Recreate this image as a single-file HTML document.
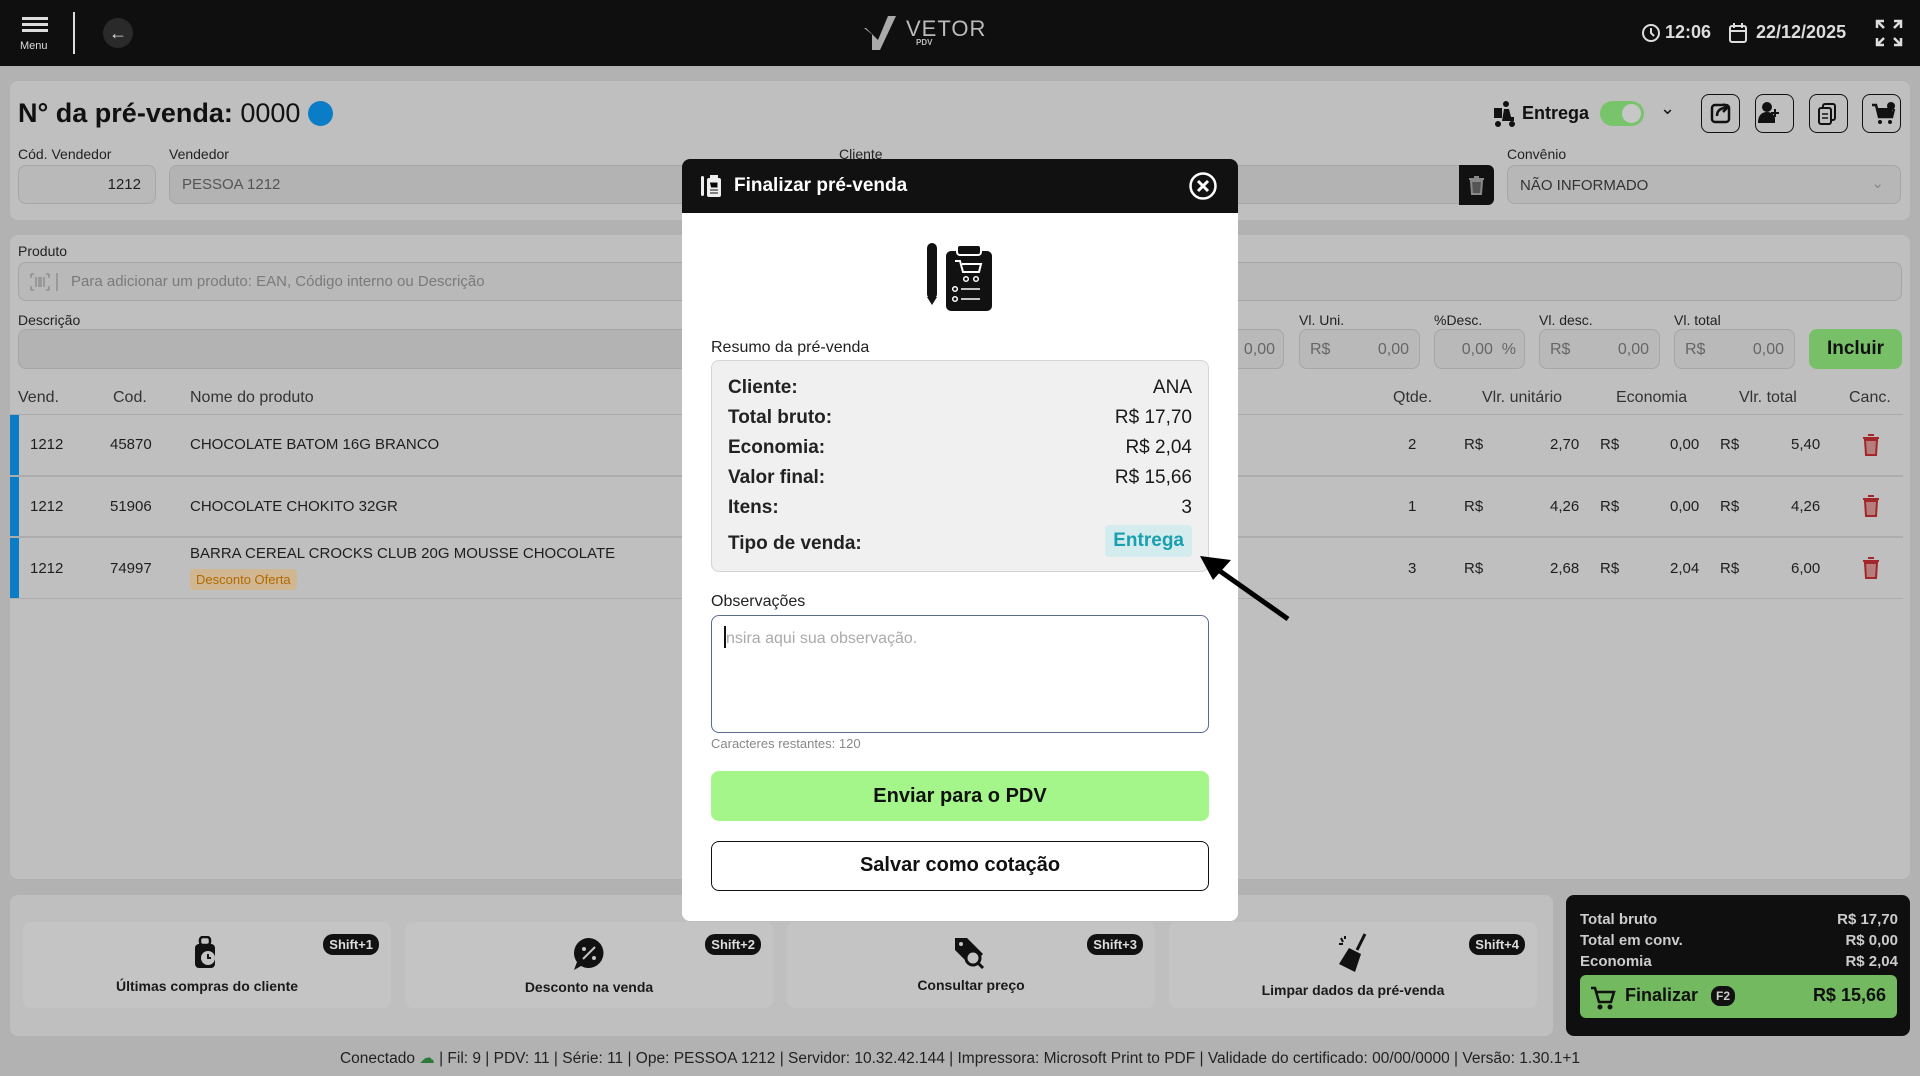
<!DOCTYPE html>
<html><head><meta charset="utf-8"><style>
*{box-sizing:border-box;margin:0;padding:0}
body{width:1920px;height:1076px;overflow:hidden;background:#b2b2b2;font-family:"Liberation Sans",sans-serif;color:#1a1a1a;position:relative}
.a{position:absolute}
.panel{position:absolute;background:#bfbfbf;border-radius:8px}
.lbl{position:absolute;font-size:14px;color:#222}
.inp{position:absolute;background:#b9b9b9;border:1px solid #a6a6a6;border-radius:8px;font-size:15px;color:#555}
.th{position:absolute;font-size:16px;color:#333;top:389px}
.td{position:absolute;font-size:15px;color:#1e1e1e}
.card{position:absolute;background:#c4c4c4;border-radius:8px;top:922px;height:86px;width:368px}
.card .t{position:absolute;left:0;right:0;text-align:center;font-size:14px;font-weight:bold;color:#1a1a1a}
.badge{position:absolute;right:12px;top:12px;background:#111;color:#ddd;font-size:13px;font-weight:bold;border-radius:10px;padding:3px 6px}
.row{position:absolute;left:16px;right:16px;font-size:19px;display:flex;justify-content:space-between}
.row b{color:#222}
</style></head><body>
<div class="a" style="left:0;top:0;width:1920px;height:66px;background:#0f0f0f"></div>
<div class="a" style="left:22px;top:17px;width:26px;height:3px;background:#ddd;box-shadow:0 6px 0 #ddd,0 12px 0 #ddd"></div>
<div class="a" style="left:20px;top:40px;font-size:11px;color:#ddd">Menu</div>
<div class="a" style="left:73px;top:12px;width:2px;height:42px;background:#ddd"></div>
<div class="a" style="left:103px;top:18px;width:30px;height:30px;border-radius:50%;background:#2a2a2a;color:#ddd;font-size:18px;text-align:center;line-height:30px">←</div>
<svg class="a" style="left:862px;top:14px" width="40" height="38"><path d="M2 14 L12 22 L4 14Z M10 36 L18 36 L34 2 L26 2 L16 26 L10 20Z" fill="#aaa"/></svg>
<div class="a" style="left:906px;top:16px;font-size:22px;color:#bbb;letter-spacing:1px">VETOR</div>
<div class="a" style="left:916px;top:38px;font-size:8px;color:#bbb;font-weight:bold">PDV</div>
<svg class="a" style="left:1641px;top:23px" width="20" height="20"><circle cx="10" cy="10" r="8" fill="none" stroke="#ddd" stroke-width="2"/><path d="M10 5v5l3 3" stroke="#ddd" stroke-width="2" fill="none"/></svg>
<div class="a" style="left:1665px;top:22px;font-size:18px;font-weight:bold;color:#ddd">12:06</div>
<svg class="a" style="left:1728px;top:22px" width="20" height="22"><rect x="2" y="4" width="16" height="16" rx="2" fill="none" stroke="#ddd" stroke-width="2"/><path d="M2 9h16M6 1v5M14 1v5" stroke="#ddd" stroke-width="2"/></svg>
<div class="a" style="left:1756px;top:22px;font-size:18px;font-weight:bold;color:#ddd">22/12/2025</div>
<svg class="a" style="left:1874px;top:18px" width="30" height="30"><path d="M3 10V3h7M3 3l7 7M27 10V3h-7M27 3l-7 7M3 20v7h7M3 27l7-7M27 20v7h-7M27 27l-7-7" stroke="#ddd" stroke-width="2.5" fill="none"/></svg>

<div class="panel" style="left:10px;top:81px;width:1900px;height:139px"></div>
<div class="a" style="left:18px;top:98px;font-size:27px;font-weight:bold;color:#111">N° da pré-venda: <span style="font-weight:normal">0000</span></div>
<div class="a" style="left:303px;top:101px;width:25px;height:25px;border-radius:50%;background:#0a7dc6;margin-left:5px"></div>
<div class="lbl" style="left:18px;top:146px">Cód. Vendedor</div>
<div class="lbl" style="left:169px;top:146px">Vendedor</div>
<div class="lbl" style="left:839px;top:146px">Cliente</div>
<div class="lbl" style="left:1507px;top:146px">Convênio</div>
<div class="inp" style="left:18px;top:165px;width:138px;height:39px;text-align:right;padding:10px 14px 0 0;color:#222">1212</div>
<div class="inp" style="left:169px;top:165px;width:1325px;height:39px;padding:10px 0 0 12px;background:#b3b3b3">PESSOA 1212</div>
<div class="a" style="left:1459px;top:165px;width:35px;height:40px;background:#111;border-radius:0 6px 6px 0"></div>
<svg class="a" style="left:1468px;top:175px" width="17" height="20"><path d="M1 4h15M6 2h5M3 6h11l-1 13H4z" stroke="#888" stroke-width="2" fill="#555"/></svg>
<div class="inp" style="left:1507px;top:165px;width:394px;height:39px;padding:11px 0 0 12px;color:#333;background:#b7b7b7">NÃO INFORMADO<span style="position:absolute;right:16px;top:8px;color:#888">⌄</span></div>
<svg class="a" style="left:1492px;top:100px" width="26" height="28"><circle cx="14" cy="4" r="3" fill="#111"/><rect x="2" y="8" width="8" height="10" fill="#111"/><path d="M12 9h5l2 8h3v4H10z" fill="#111"/><circle cx="6" cy="24" r="3" fill="#111"/><circle cx="20" cy="24" r="3" fill="#111"/></svg>
<div class="a" style="left:1522px;top:103px;font-size:18px;font-weight:bold;color:#111">Entrega</div>
<div class="a" style="left:1600px;top:101px;width:44px;height:25px;border-radius:13px;background:#78c46a"><div style="position:absolute;right:3px;top:3px;width:19px;height:19px;border-radius:50%;background:#c7c7c7"></div></div>
<div class="a" style="left:1660px;top:98px;font-size:18px;color:#111">⌄</div>
<div class="a" style="left:1701px;top:94px;width:39px;height:39px;border:1.5px solid #111;border-radius:8px"></div>
<div class="a" style="left:1755px;top:94px;width:39px;height:39px;border:1.5px solid #111;border-radius:8px"></div>
<div class="a" style="left:1809px;top:94px;width:39px;height:39px;border:1.5px solid #111;border-radius:8px"></div>
<div class="a" style="left:1862px;top:94px;width:39px;height:39px;border:1.5px solid #111;border-radius:8px"></div>
<svg class="a" style="left:1701px;top:94px" width="200" height="39">
<rect x="11" y="11" width="17" height="17" rx="3" fill="none" stroke="#111" stroke-width="2.5"/><path d="M16 22c0-6 4-8 9-8M22 10l4 4-4 4" stroke="#111" stroke-width="2.5" fill="none"/>
<circle cx="66" cy="13" r="5" fill="#111"/><path d="M57 29c0-8 4-11 9-11s7 3 8 6v5z" fill="#111"/><path d="M74 15v8M70 19h8" stroke="#111" stroke-width="2"/>
<rect x="122" y="10" width="12" height="16" rx="2" fill="none" stroke="#111" stroke-width="2"/><rect x="118" y="14" width="12" height="16" rx="2" fill="#bfbfbf" stroke="#111" stroke-width="2"/><path d="M121 20h6M121 24h6" stroke="#111" stroke-width="1.5"/>
<path d="M171 11h4l3 12h13l2-8" stroke="#111" stroke-width="2.5" fill="none"/><rect x="177" y="14" width="14" height="8" fill="#111"/><circle cx="179" cy="28" r="2" fill="#111"/><circle cx="189" cy="28" r="2" fill="#111"/><circle cx="190" cy="12" r="4" fill="#111"/>
</svg>

<div class="panel" style="left:10px;top:235px;width:1900px;height:644px"></div>
<div class="lbl" style="left:18px;top:243px">Produto</div>
<div class="inp" style="left:18px;top:262px;width:1884px;height:39px;padding:10px 0 0 52px;color:#7a7a7a">Para adicionar um produto: EAN, Código interno ou Descrição</div>
<svg class="a" style="left:29px;top:272px" width="30" height="20"><path d="M2 2h3M2 2v4M2 18h3M2 18v-4M20 2h-3M20 2v4M20 18h-3M20 18v-4M7 5v10M10 5v10M12 5v10M15 5v10M28 1v18" stroke="#888" stroke-width="1.3" fill="none"/></svg>
<div class="lbl" style="left:18px;top:312px">Descrição</div>
<div class="inp" style="left:18px;top:329px;width:1266px;height:40px;background:#b3b3b3"></div>
<div class="inp" style="left:1220px;top:329px;width:64px;height:40px;padding:11px 8px 0 0;text-align:right;color:#666;font-size:16px">0,00</div>
<div class="lbl" style="left:1299px;top:312px">Vl. Uni.</div>
<div class="lbl" style="left:1434px;top:312px">%Desc.</div>
<div class="lbl" style="left:1539px;top:312px">Vl. desc.</div>
<div class="lbl" style="left:1674px;top:312px">Vl. total</div>
<div class="inp" style="left:1299px;top:329px;width:121px;height:40px;padding:11px 10px 0 10px;color:#666;font-size:16px">R$<span style="float:right">0,00</span></div>
<div class="inp" style="left:1434px;top:329px;width:91px;height:40px;padding:11px 8px 0 0;text-align:right;color:#666;font-size:16px">0,00 &nbsp;%</div>
<div class="inp" style="left:1539px;top:329px;width:121px;height:40px;padding:11px 10px 0 10px;color:#666;font-size:16px">R$<span style="float:right">0,00</span></div>
<div class="inp" style="left:1674px;top:329px;width:121px;height:40px;padding:11px 10px 0 10px;color:#666;font-size:16px">R$<span style="float:right">0,00</span></div>
<div class="a" style="left:1809px;top:329px;width:93px;height:40px;background:#78c067;border-radius:8px;text-align:center;line-height:40px;font-size:19px;font-weight:bold;color:#111">Incluir</div>

<div class="th" style="left:18px">Vend.</div>
<div class="th" style="left:113px">Cod.</div>
<div class="th" style="left:190px">Nome do produto</div>
<div class="th" style="left:1393px">Qtde.</div>
<div class="th" style="left:1482px">Vlr. unitário</div>
<div class="th" style="left:1616px">Economia</div>
<div class="th" style="left:1739px">Vlr. total</div>
<div class="th" style="left:1849px">Canc.</div>
<div class="a" style="left:10px;top:414px;width:1893px;height:1px;background:#a9a9a9"></div>
<div class="a" style="left:10px;top:475px;width:1893px;height:2px;background:#adadad"></div>
<div class="a" style="left:10px;top:536px;width:1893px;height:2px;background:#adadad"></div>
<div class="a" style="left:10px;top:598px;width:1893px;height:1px;background:#adadad"></div>
<div class="a" style="left:10px;top:415px;width:9px;height:60px;background:#0a7dc6"></div>
<div class="a" style="left:10px;top:477px;width:9px;height:59px;background:#0a7dc6"></div>
<div class="a" style="left:10px;top:538px;width:9px;height:60px;background:#0a7dc6"></div>

<div class="td" style="left:30px;top:436px">1212</div><div class="td" style="left:110px;top:436px">45870</div><div class="td" style="left:190px;top:436px">CHOCOLATE BATOM 16G BRANCO</div>
<div class="td" style="left:30px;top:498px">1212</div><div class="td" style="left:110px;top:498px">51906</div><div class="td" style="left:190px;top:498px">CHOCOLATE CHOKITO 32GR</div>
<div class="td" style="left:30px;top:560px">1212</div><div class="td" style="left:110px;top:560px">74997</div><div class="td" style="left:190px;top:545px">BARRA CEREAL CROCKS CLUB 20G MOUSSE CHOCOLATE</div>
<div class="a" style="left:190px;top:569px;background:#d1b791;color:#b06a00;font-size:13px;padding:3px 6px;border-radius:4px">Desconto Oferta</div>

<div class="td" style="left:1408px;top:436px">2</div><div class="td" style="left:1464px;top:436px">R$</div><div class="td" style="left:1550px;top:436px">2,70</div><div class="td" style="left:1600px;top:436px">R$</div><div class="td" style="left:1670px;top:436px">0,00</div><div class="td" style="left:1720px;top:436px">R$</div><div class="td" style="left:1791px;top:436px">5,40</div>
<div class="td" style="left:1408px;top:498px">1</div><div class="td" style="left:1464px;top:498px">R$</div><div class="td" style="left:1550px;top:498px">4,26</div><div class="td" style="left:1600px;top:498px">R$</div><div class="td" style="left:1670px;top:498px">0,00</div><div class="td" style="left:1720px;top:498px">R$</div><div class="td" style="left:1791px;top:498px">4,26</div>
<div class="td" style="left:1408px;top:560px">3</div><div class="td" style="left:1464px;top:560px">R$</div><div class="td" style="left:1550px;top:560px">2,68</div><div class="td" style="left:1600px;top:560px">R$</div><div class="td" style="left:1670px;top:560px">2,04</div><div class="td" style="left:1720px;top:560px">R$</div><div class="td" style="left:1791px;top:560px">6,00</div>
<svg class="a" style="left:1862px;top:434px" width="18" height="22"><path d="M1 4h16M6 1h6M3 6h12l-1 15H4z" stroke="#a3262a" stroke-width="2" fill="#b67d7d"/></svg>
<svg class="a" style="left:1862px;top:495px" width="18" height="22"><path d="M1 4h16M6 1h6M3 6h12l-1 15H4z" stroke="#a3262a" stroke-width="2" fill="#b67d7d"/></svg>
<svg class="a" style="left:1862px;top:557px" width="18" height="22"><path d="M1 4h16M6 1h6M3 6h12l-1 15H4z" stroke="#a3262a" stroke-width="2" fill="#b67d7d"/></svg>

<div class="panel" style="left:10px;top:895px;width:1543px;height:141px"></div>
<div class="card" style="left:23px"><div class="badge">Shift+1</div><svg class="a" style="left:168px;top:14px" width="30" height="34"><rect x="9" y="1" width="10" height="8" rx="3" fill="none" stroke="#111" stroke-width="2.5"/><rect x="4" y="8" width="20" height="24" rx="4" fill="#111"/><circle cx="17" cy="22" r="7" fill="#c4c4c4"/><path d="M17 18v4h3" stroke="#111" stroke-width="2" fill="none"/></svg><div class="t" style="top:56px">Últimas compras do cliente</div></div>
<div class="card" style="left:405px"><div class="badge">Shift+2</div><svg class="a" style="left:166px;top:14px" width="36" height="36"><path d="M18 2a15 15 0 1 1-8 28l-7 4 3-8A15 15 0 0 1 18 2z" fill="#111"/><path d="M12 23l12-12" stroke="#c4c4c4" stroke-width="2"/><circle cx="13" cy="13" r="2" fill="#c4c4c4"/><circle cx="23" cy="22" r="2" fill="#c4c4c4"/></svg><div class="t" style="top:57px">Desconto na venda</div></div>
<div class="card" style="left:787px"><div class="badge">Shift+3</div><svg class="a" style="left:166px;top:14px" width="34" height="36"><path d="M2 2h12l16 16-12 12L2 14z" fill="#111"/><circle cx="8" cy="8" r="2" fill="#c4c4c4"/><circle cx="20" cy="22" r="7" fill="#c4c4c4" stroke="#111" stroke-width="3"/><path d="M25 27l5 5" stroke="#111" stroke-width="3"/></svg><div class="t" style="top:55px">Consultar preço</div></div>
<div class="card" style="left:1169px"><div class="badge">Shift+4</div><svg class="a" style="left:166px;top:10px" width="36" height="42"><path d="M30 2L22 18" stroke="#111" stroke-width="3"/><path d="M14 16l12 6-6 18L4 32z" fill="#111"/><path d="M6 6l2 4M4 12h4M10 4v3" stroke="#111" stroke-width="2"/></svg><div class="t" style="top:60px">Limpar dados da pré-venda</div></div>

<div class="a" style="left:1566px;top:895px;width:344px;height:141px;background:#0f0f0f;border-radius:8px"></div>
<div class="a" style="left:1580px;top:909px;width:318px;font-size:15px;font-weight:bold;color:#ccc;line-height:21px">
<div style="display:flex;justify-content:space-between"><span>Total bruto</span><span>R$ 17,70</span></div>
<div style="display:flex;justify-content:space-between"><span>Total em conv.</span><span>R$ 0,00</span></div>
<div style="display:flex;justify-content:space-between"><span>Economia</span><span>R$ 2,04</span></div></div>
<div class="a" style="left:1580px;top:975px;width:317px;height:43px;background:#72b95f;border-radius:6px"></div>
<svg class="a" style="left:1590px;top:985px" width="26" height="26"><path d="M1 3h4l4 14h12l3-10H7" stroke="#111" stroke-width="2.5" fill="none"/><circle cx="10" cy="22" r="2.5" fill="#111"/><circle cx="20" cy="22" r="2.5" fill="#111"/></svg>
<div class="a" style="left:1625px;top:985px;font-size:18px;font-weight:bold;color:#111">Finalizar</div>
<div class="a" style="left:1711px;top:986px;background:#111;color:#ccc;font-size:12px;font-weight:bold;border-radius:9px;padding:3px 5px">F2</div>
<div class="a" style="left:1790px;top:985px;width:96px;text-align:right;font-size:18px;font-weight:bold;color:#111">R$ 15,66</div>

<div class="a" style="left:0;top:1049px;width:1920px;text-align:center;font-size:15.5px;color:#222">Conectado <span style="color:#2a7a3a">☁</span> | Fil: 9 | PDV: 11 | Série: 11 | Ope: PESSOA 1212 | Servidor: 10.32.42.144 | Impressora: Microsoft Print to PDF | Validade do certificado: 00/00/0000 | Versão: 1.30.1+1</div>

<div class="a" style="left:682px;top:159px;width:556px;height:762px;background:#fff;border-radius:8px;overflow:hidden">
<div style="height:54px;background:#111;position:relative">
<svg class="a" style="left:18px;top:15px" width="22" height="24"><rect x="1" y="2" width="3" height="20" rx="1.5" fill="#eee"/><rect x="7" y="4" width="14" height="19" rx="2" fill="#eee"/><rect x="10" y="1" width="8" height="5" fill="#eee"/><path d="M10 9h7v4h-6M10 16h8M10 19h8" stroke="#111" stroke-width="1"/></svg>
<div class="a" style="left:52px;top:16px;color:#fff;font-size:19px;font-weight:bold">Finalizar pré-venda</div>
<svg class="a" style="left:506px;top:12px" width="30" height="30"><circle cx="15" cy="15" r="12.5" fill="none" stroke="#fff" stroke-width="2.5"/><path d="M10 10l10 10M20 10l-10 10" stroke="#fff" stroke-width="3"/></svg>
</div>
<svg class="a" style="left:245px;top:80px" width="70" height="74"><rect x="0" y="4" width="10" height="56" rx="5" fill="#111"/><path d="M0 58h10l-5 8z" fill="#111"/><rect x="19" y="12" width="46" height="60" rx="5" fill="#111"/><rect x="30" y="6" width="24" height="10" rx="3" fill="#111" stroke="#fff" stroke-width="2"/><path d="M28 22h5l3 11h16l2-8H35" stroke="#fff" stroke-width="2" fill="none"/><circle cx="39" cy="40" r="2.3" fill="none" stroke="#fff" stroke-width="1.5"/><circle cx="49" cy="40" r="2.3" fill="none" stroke="#fff" stroke-width="1.5"/><circle cx="28" cy="50" r="2.3" fill="none" stroke="#fff" stroke-width="1.5"/><circle cx="28" cy="60" r="2.3" fill="none" stroke="#fff" stroke-width="1.5"/><path d="M34 50h19M34 60h19" stroke="#fff" stroke-width="1.6"/></svg>
<div class="a" style="left:29px;top:180px;font-size:16px;color:#222">Resumo da pré-venda</div>
<div class="a" style="left:29px;top:201px;width:498px;height:212px;background:#f0f0f0;border:1px solid #d4d4d4;border-radius:8px">
<div class="row" style="top:16px"><b>Cliente:</b><span>ANA</span></div>
<div class="row" style="top:46px"><b>Total bruto:</b><span>R$ 17,70</span></div>
<div class="row" style="top:76px"><b>Economia:</b><span>R$ 2,04</span></div>
<div class="row" style="top:106px"><b>Valor final:</b><span>R$ 15,66</span></div>
<div class="row" style="top:136px"><b>Itens:</b><span>3</span></div>
<div class="row" style="top:170px;align-items:center"><b>Tipo de venda:</b><span style="background:#d5ecee;color:#1a9faf;font-weight:bold;padding:5px 8px;border-radius:4px;margin-top:-6px">Entrega</span></div>
</div>
<div class="a" style="left:29px;top:434px;font-size:16px;color:#222">Observações</div>
<div class="a" style="left:29px;top:456px;width:498px;height:118px;border:1.5px solid #5b6b8c;border-radius:8px;padding:10px 0 0 12px;font-size:16px;color:#aaa"><span style="display:inline-block;width:2px;height:22px;background:#111;vertical-align:-5px"></span>nsira aqui sua observação.</div>
<div class="a" style="left:29px;top:577px;font-size:13px;color:#888">Caracteres restantes: 120</div>
<div class="a" style="left:29px;top:612px;width:498px;height:50px;background:#a4f58a;border-radius:8px;text-align:center;line-height:50px;font-size:20px;font-weight:bold;color:#111">Enviar para o PDV</div>
<div class="a" style="left:29px;top:682px;width:498px;height:50px;border:1.5px solid #111;border-radius:8px;text-align:center;line-height:47px;font-size:20px;font-weight:bold;color:#111">Salvar como cotação</div>
</div>
<svg class="a" style="left:1195px;top:550px" width="100" height="75"><path d="M93 69L22 19" stroke="#000" stroke-width="5"/><path d="M5 6L36 10L18 30z" fill="#000"/></svg>
</body></html>
